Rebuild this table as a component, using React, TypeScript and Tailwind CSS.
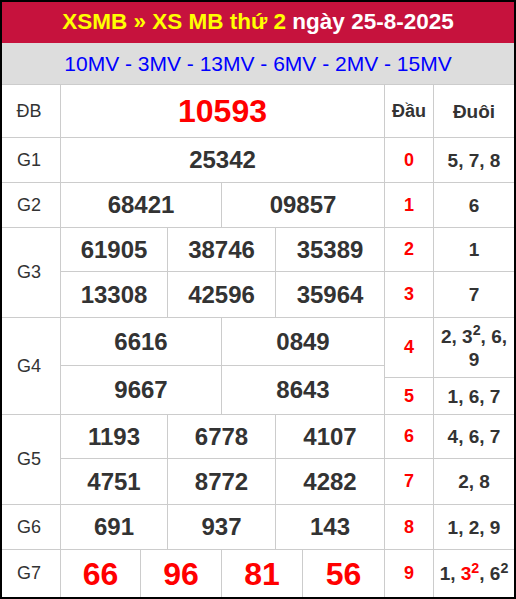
import React from 'react'

type Cell = React.ReactNode

interface Block {
  label: string
  h: string
  rowH: string[]
  nums: string[][]
  ddH: string[]
  dd: [Cell, Cell][]
  numCls?: string
  head?: boolean
  last?: boolean
}

const cols: Record<number, string> = {
  1: 'grid-cols-1',
  2: 'grid-cols-[161px_162px]',
  3: 'grid-cols-[107px_108px_108px]',
  4: 'grid-cols-[80px_81px_81px_81px]',
}

const blocks: Block[] = [
  {
    label: 'ĐB',
    h: 'h-[53px]',
    rowH: ['h-full'],
    nums: [['10593']],
    numCls: 'text-[32px] text-[#f00]',
    ddH: ['h-full'],
    dd: [['Đầu', 'Đuôi']],
    head: true,
  },
  {
    label: 'G1',
    h: 'h-[45px]',
    rowH: ['h-full'],
    nums: [['25342']],
    ddH: ['h-full'],
    dd: [['0', '5, 7, 8']],
  },
  {
    label: 'G2',
    h: 'h-[45px]',
    rowH: ['h-full'],
    nums: [['68421', '09857']],
    ddH: ['h-full'],
    dd: [['1', '6']],
  },
  {
    label: 'G3',
    h: 'h-[90px]',
    rowH: ['h-[44px]', 'h-[45px]'],
    nums: [
      ['61905', '38746', '35389'],
      ['13308', '42596', '35964'],
    ],
    ddH: ['h-[44px]', 'h-[45px]'],
    dd: [
      ['2', '1'],
      ['3', '7'],
    ],
  },
  {
    label: 'G4',
    h: 'h-[97px]',
    rowH: ['h-[48px]', 'h-[48px]'],
    nums: [
      ['6616', '0849'],
      ['9667', '8643'],
    ],
    ddH: ['h-[60px]', 'h-[36px]'],
    dd: [
      [
        '4',
        <>
          2, 3<sup>2</sup>, 6, 9
        </>,
      ],
      ['5', '1, 6, 7'],
    ],
  },
  {
    label: 'G5',
    h: 'h-[90px]',
    rowH: ['h-[44px]', 'h-[45px]'],
    nums: [
      ['1193', '6778', '4107'],
      ['4751', '8772', '4282'],
    ],
    ddH: ['h-[44px]', 'h-[45px]'],
    dd: [
      ['6', '4, 6, 7'],
      ['7', '2, 8'],
    ],
  },
  {
    label: 'G6',
    h: 'h-[45px]',
    rowH: ['h-full'],
    nums: [['691', '937', '143']],
    ddH: ['h-full'],
    dd: [['8', '1, 2, 9']],
  },
  {
    label: 'G7',
    h: 'h-[47px]',
    rowH: ['h-full'],
    nums: [['66', '96', '81', '56']],
    numCls: 'text-[32px] text-[#f00]',
    ddH: ['h-full'],
    dd: [
      [
        '9',
        <>
          1, <span className="text-[#f00]">3<sup>2</sup></span>, 6<sup>2</sup>
        </>,
      ],
    ],
    last: true,
  },
]

const PrizeRow: React.FC<{ b: Block }> = ({ b }) => (
  <div className={`flex ${b.h} ${b.last ? '' : 'border-b border-[#ccc]'}`}>
    <div className="w-[59px] border-r border-[#ccc] flex items-center justify-center pr-[4px] text-[18px] text-[#333]">
      {b.label}
    </div>
    <div className="w-[324px] border-r border-[#ccc] flex flex-col divide-y divide-[#ccc]">
      {b.nums.map((row, i) => (
        <div key={i} className={`grid ${cols[row.length]} divide-x divide-[#ccc] ${b.rowH[i]}`}>
          {row.map((n) => (
            <div
              key={n}
              className={`flex items-center justify-center font-bold ${b.numCls ?? 'text-[24px] text-[#333]'}`}
            >
              {n}
            </div>
          ))}
        </div>
      ))}
    </div>
    <div className="w-[129px] flex flex-col divide-y divide-[#ccc]">
      {b.dd.map(([d, t], i) => (
        <div key={i} className={`flex ${b.ddH[i]}`}>
          <div
            className={`w-[49px] border-r border-[#ccc] flex items-center justify-center font-bold text-[18px] ${
              b.head ? 'text-[#333]' : 'text-[#f00]'
            }`}
          >
            {d}
          </div>
          <div className="w-[80px] flex items-center justify-center text-center px-[4px] leading-[23px] font-bold text-[19px] text-[#333]">
            <span>{t}</span>
          </div>
        </div>
      ))}
    </div>
  </div>
)

export default function App() {
  return (
    <div className="w-[516px] h-[599px] border-2 border-black bg-white font-['Liberation_Sans',Arial,sans-serif] overflow-hidden">
      <div className="h-[41px] bg-[#c6123d] flex items-center justify-center pb-[2px] text-[22.5px] font-bold">
        <span className="text-[#ffff00]">XSMB » XS MB thứ 2</span>
        <span className="text-white">&nbsp;ngày 25-8-2025</span>
      </div>
      <div className="h-[42px] bg-[#dddddd] border-b border-[#ccc] flex items-center justify-center text-[21px] text-[#0000ff]">
        10MV - 3MV - 13MV - 6MV - 2MV - 15MV
      </div>
      {blocks.map((b) => (
        <PrizeRow key={b.label} b={b} />
      ))}
    </div>
  )
}
